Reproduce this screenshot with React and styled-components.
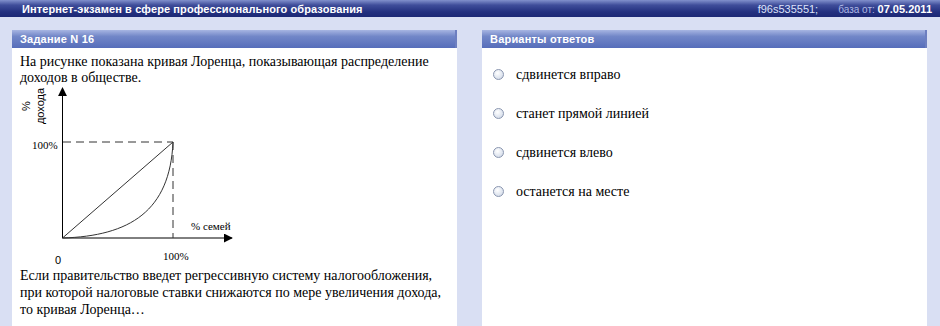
import React from 'react'
import styled, { createGlobalStyle } from 'styled-components'

const GlobalStyle = createGlobalStyle`
  html, body {
    margin: 0;
    padding: 0;
  }
  body {
    background: #d9dff3;
    font-family: "Liberation Sans", Arial, sans-serif;
  }
`

const Page = styled.div`
  min-height: 326px;
  display: flex;
  flex-direction: column;
  background: #d9dff3;
`

const TopBar = styled.div`
  height: 17px;
  display: flex;
  align-items: center;
  padding: 0 8px 0 22px;
  background: linear-gradient(to bottom, #8190cc 0%, #3f4d9a 30%, #23307f 70%, #1c2875 100%);
  color: #fff;
  font-size: 11px;
  font-weight: bold;
`

const Title = styled.div`
  flex: 1;
  letter-spacing: 0.1px;
`

const Meta = styled.div`
  display: flex;
  align-items: baseline;
  gap: 20px;
  font-size: 11px;
`

const Code = styled.span`
  color: #dde3fb;
  font-weight: normal;
`

const DateLabel = styled.span`
  color: #aeb8e4;
  font-weight: normal;
  font-size: 10px;
`

const DateValue = styled.span`
  color: #fff;
  font-weight: bold;
`

const Main = styled.div`
  flex: 1;
  display: flex;
  gap: 25px;
  padding: 13px 13px 0 12px;
`

const Panel = styled.div`
  width: 445px;
  display: flex;
  flex-direction: column;
  background: #fff;
`

const PanelHeader = styled.div`
  height: 18px;
  display: flex;
  align-items: center;
  padding-left: 8px;
  background: linear-gradient(to bottom, #a7b5e2 0%, #7287c8 35%, #566dba 100%);
  border-right: 2px solid #6d7fc0;
  color: #fff;
  font-size: 11px;
  font-weight: bold;
  letter-spacing: 0.2px;
`

const PanelBody = styled.div`
  flex: 1;
  padding: ${p => p.$pad};
  color: #000;
`

const Para = styled.p`
  margin: 0;
  font-family: "Liberation Serif", "Times New Roman", serif;
  font-size: 14px;
  line-height: ${p => p.$lh};
  white-space: nowrap;
`

const Chart = styled.svg`
  display: block;
  width: 232px;
  height: 181px;
`

const Options = styled.div`
  display: flex;
  flex-direction: column;
`

const Option = styled.label`
  height: 39px;
  display: flex;
  align-items: center;
  gap: 12px;
  font-family: "Liberation Serif", "Times New Roman", serif;
  font-size: 14px;
`

const Radio = styled.span`
  width: 9px;
  height: 9px;
  border-radius: 50%;
  border: 1px solid #8a96b0;
  background: radial-gradient(circle at 40% 35%, #ffffff 0%, #dfe5ef 60%, #c3cbdb 100%);
  flex-shrink: 0;
`

const LorenzChart = () => (
  <Chart viewBox="0 0 232 181">
    <defs>
      <marker id="arr" viewBox="0 0 10 10" refX="9" refY="5" markerWidth="9" markerHeight="9" markerUnits="userSpaceOnUse" orient="auto">
        <path d="M0 0 L10 5 L0 10 z" fill="#000" />
      </marker>
    </defs>
    <line x1="42.5" y1="152" x2="42.5" y2="2" stroke="#000" strokeWidth="1" markerEnd="url(#arr)" />
    <line x1="42.5" y1="152" x2="212" y2="152" stroke="#000" strokeWidth="1" markerEnd="url(#arr)" />
    <line x1="43" y1="56" x2="153" y2="56" stroke="#333" strokeWidth="1" strokeDasharray="8 5" />
    <line x1="153" y1="56" x2="153" y2="152" stroke="#333" strokeWidth="1" strokeDasharray="8 5" />
    <line x1="42.5" y1="152" x2="153" y2="56" stroke="#333" strokeWidth="1" />
    <path d="M42.5 152 C 110 150, 150 125, 153 56" fill="none" stroke="#333" strokeWidth="1" />
    <g fontFamily="'Liberation Sans', Arial, sans-serif" fontSize="11" fill="#000">
      <text transform="translate(10 20) rotate(-90)" textAnchor="middle">%</text>
      <text transform="translate(24 20) rotate(-90)" textAnchor="middle">дохода</text>
      <text x="35" y="178">0</text>
    </g>
    <g fontFamily="'Liberation Serif', 'Times New Roman', serif" fontSize="11" fill="#000">
      <text x="12" y="63">100%</text>
      <text x="171" y="144">% семей</text>
      <text x="143" y="174">100%</text>
    </g>
  </Chart>
)

const answers = [
  'сдвинется вправо',
  'станет прямой линией',
  'сдвинется влево',
  'останется на месте',
]

const App = () => {
  return (
    <Page>
      <GlobalStyle />
      <TopBar>
        <Title>Интернет-экзамен в сфере профессионального образования</Title>
        <Meta>
          <Code>f96s535551;</Code>
          <span>
            <DateLabel>база от: </DateLabel>
            <DateValue>07.05.2011</DateValue>
          </span>
        </Meta>
      </TopBar>
      <Main>
        <Panel>
          <PanelHeader>Задание N 16</PanelHeader>
          <PanelBody $pad="6px 8px 0 8px">
            <Para $lh="16px">
              На рисунке показана кривая Лоренца, показывающая распределение
              <br />
              доходов в обществе.
            </Para>
            <LorenzChart />
            <Para $lh="17px">
              Если правительство введет регрессивную систему налогообложения,
              <br />
              при которой налоговые ставки снижаются по мере увеличения дохода,
              <br />
              то кривая Лоренца…
            </Para>
          </PanelBody>
        </Panel>
        <Panel>
          <PanelHeader>Варианты ответов</PanelHeader>
          <PanelBody $pad="7px 11px 0 11px">
            <Options>
              {answers.map(a => (
                <Option key={a}>
                  <Radio />
                  {a}
                </Option>
              ))}
            </Options>
          </PanelBody>
        </Panel>
      </Main>
    </Page>
  )
}

export default App
